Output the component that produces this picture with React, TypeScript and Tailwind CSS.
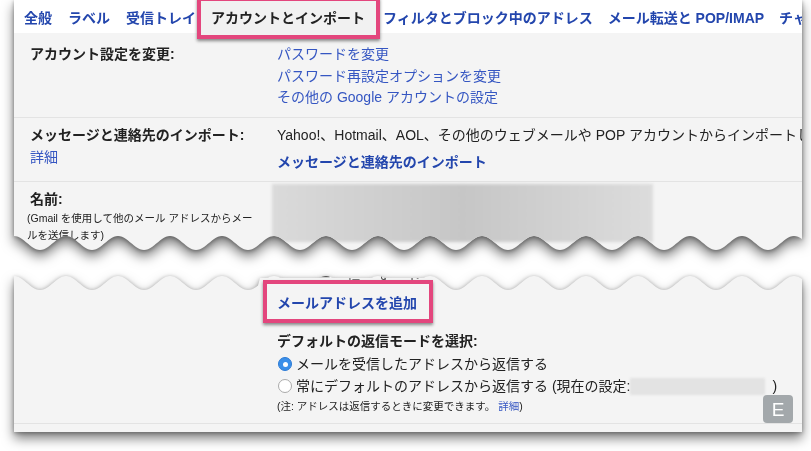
import React from "react";

const W = 788;
const P = 52;
const CREST = 482 - 14;

function yUp(x: number) {
  return 243 - 7 * Math.cos((2 * Math.PI * (x - CREST)) / P);
}
function yLow(x: number) {
  const y = 13 - 7 * Math.cos((2 * Math.PI * (x - CREST)) / P);
  if (x >= 246 && x <= 422) return Math.min(y, 8);
  return y;
}
function upperPath() {
  let d = `M0,0 L${W},0`;
  for (let x = W; x >= 0; x -= 2) d += ` L${x},${yUp(x).toFixed(2)}`;
  return d + " Z";
}
function lowerPath() {
  let d = `M0,${yLow(0).toFixed(2)}`;
  for (let x = 2; x <= W; x += 2) d += ` L${x},${yLow(x).toFixed(2)}`;
  return d + ` L${W},162 L0,162 Z`;
}

function Radio({ on }: { on: boolean }) {
  return on ? (
    <span className="ml-[1px] mr-[4px] flex h-[14px] w-[14px] shrink-0 items-center justify-center rounded-full border border-[#2c7bd6] bg-[#3b8fe9]">
      <span className="h-[5px] w-[5px] rounded-full bg-white" />
    </span>
  ) : (
    <span className="ml-[1px] mr-[4px] h-[14px] w-[14px] shrink-0 rounded-full border border-[#aaaaaa] bg-white" />
  );
}

export default function App() {
  return (
    <div className="h-[451px] w-[811px] overflow-hidden bg-white font-['Liberation_Sans','Noto_Sans_CJK_JP',sans-serif] text-[#222]">
      <svg width="0" height="0" className="block">
        <defs>
          <clipPath id="tearTop" clipPathUnits="userSpaceOnUse">
            <path d={upperPath()} />
          </clipPath>
          <clipPath id="tearBottom" clipPathUnits="userSpaceOnUse">
            <path d={lowerPath()} />
          </clipPath>
        </defs>
      </svg>

      {/* upper panel */}
      <div className="ml-[14px] w-[788px] [filter:drop-shadow(0_1px_2px_rgba(0,0,0,0.35))_drop-shadow(0_6px_6px_rgba(0,0,0,0.5))]">
        <div className="flex h-[252px] flex-col bg-[#f4f4f4] [clip-path:url(#tearTop)]">
          <div className="flex h-[33px] shrink-0 items-center gap-[16px] whitespace-nowrap bg-white pl-[10px] pt-[3px] text-[14px] font-bold leading-[20px] text-[#2346ad]">
            <span>全般</span>
            <span>ラベル</span>
            <span>受信トレイ</span>
            <span className="relative ml-[-1px] mr-[2px]">
              <span className="absolute bottom-[-11px] left-[-14px] right-[-15px] top-[-11px] border-[4px] border-[#e3467d] bg-[#f1f1f1] shadow-[0_2px_3px_rgba(0,0,0,0.45)]" />
              <span className="relative text-[#222]">アカウントとインポート</span>
            </span>
            <span>フィルタとブロック中のアドレス</span>
            <span className="ml-[-1px]">メール転送と POP/IMAP</span>
            <span className="ml-[-1px]">チャット</span>
          </div>

          <div className="pt-[2px] text-[14px]">
            <div className="flex border-b border-[#e3e3e3] pb-[8px] pt-[9px]">
              <div className="w-[263px] shrink-0 pl-[16px] font-bold leading-[21px]">アカウント設定を変更:</div>
              <div className="flex flex-col leading-[21.5px] text-[#3556c2]">
                <span>パスワードを変更</span>
                <span>パスワード再設定オプションを変更</span>
                <span>その他の Google アカウントの設定</span>
              </div>
            </div>

            <div className="flex border-b border-[#e3e3e3] pb-[8px] pt-[6px] leading-[22px]">
              <div className="flex w-[263px] shrink-0 flex-col pl-[16px]">
                <span className="font-bold">メッセージと連絡先のインポート:</span>
                <span className="text-[#3556c2]">詳細</span>
              </div>
              <div className="flex flex-col whitespace-nowrap">
                <span>Yahoo!、Hotmail、AOL、その他のウェブメールや POP アカウントからインポートします</span>
                <span className="mt-[5px] font-bold text-[#2346ad]">メッセージと連絡先のインポート</span>
              </div>
            </div>

            <div className="flex">
              <div className="flex w-[263px] shrink-0 flex-col pl-[16px] pt-[6px]">
                <span className="font-bold leading-[22px]">名前:</span>
                <span className="ml-[-3px] whitespace-nowrap text-[10.5px] leading-[17px]">
                  (Gmail を使用して他のメール アドレスからメー
                  <br />
                  ルを送信します)
                </span>
              </div>
              <div className="pt-[2px]">
                <div className="ml-[-5px] h-[58px] w-[381px] bg-gradient-to-r from-[#dadada] via-[#c6c6c6] to-[#dcdcdc] blur-[1.5px]" />
              </div>
            </div>
          </div>
        </div>
      </div>

      {/* lower panel */}
      <div className="relative ml-[14px] mt-[18px] w-[788px] [filter:drop-shadow(0_1px_2px_rgba(0,0,0,0.3))_drop-shadow(0_6px_6px_rgba(0,0,0,0.5))]">
        <div className="flex h-[162px] flex-col bg-[#f4f4f4] [clip-path:url(#tearBottom)]">
          <div className="flex flex-col pl-[263px] text-[14px]">
            <div className="mt-[-3px] whitespace-nowrap pl-[40px] leading-[20px] tracking-[6px] text-[#555]">ー 信 す ト</div>
            <div className="ml-[-14px] mt-[-7px] h-[43px] w-[170px] border-[4px] border-[#e3467d] pl-[10px] pt-[9px] shadow-[0_2px_3px_rgba(0,0,0,0.45)]">
              <span className="block font-bold leading-[20px] text-[#2346ad]">メールアドレスを追加</span>
            </div>
            <div className="mt-[7px] font-bold leading-[22px]">デフォルトの返信モードを選択:</div>
            <div className="mt-[1px] flex h-[22px] items-center">
              <Radio on={true} />
              <span>メールを受信したアドレスから返信する</span>
            </div>
            <div className="flex h-[22px] items-center whitespace-nowrap">
              <Radio on={false} />
              <span>常にデフォルトのアドレスから返信する (現在の設定:</span>
              <span className="h-[17px] w-[135px] bg-[#e3e3e3] blur-[1px]" />
              <span className="ml-[7px]">)</span>
            </div>
            <div className="mt-[1px] text-[10.5px] leading-[16px]">
              (注: アドレスは返信するときに変更できます。 <span className="text-[#3556c2]">詳細</span>)
            </div>
          </div>
          <div className="mt-[9px] border-t border-[#e3e3e3]" />
        </div>
        <div className="absolute left-[749px] top-[125px] flex h-[28px] w-[30px] items-center justify-center rounded-[4px] bg-[#a3a8ab] text-[19px] leading-none text-white">
          E
        </div>
      </div>
    </div>
  );
}
